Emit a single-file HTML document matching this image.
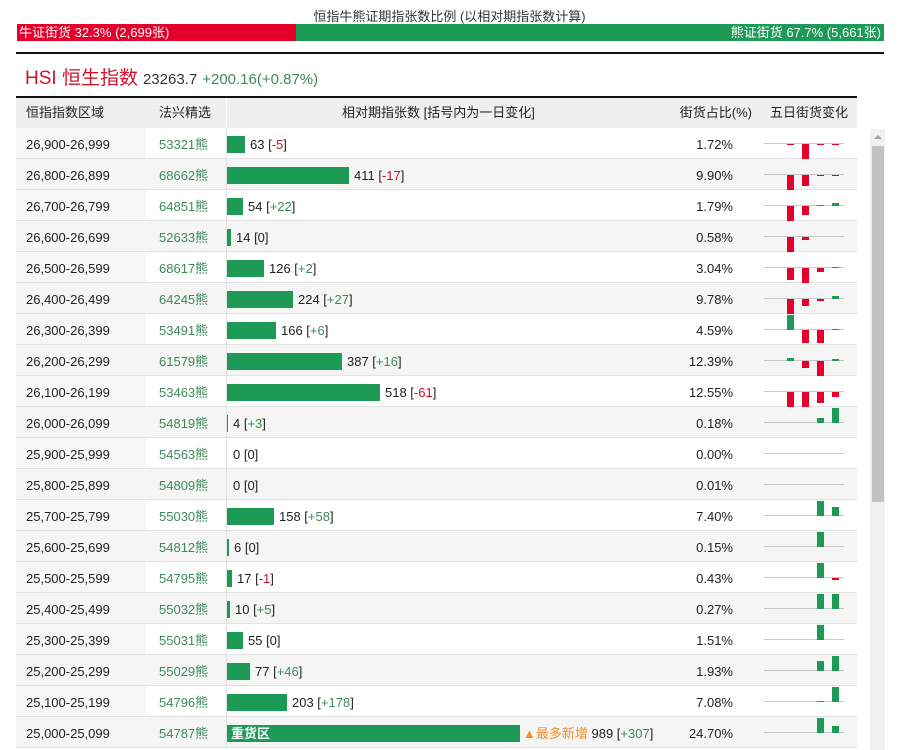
<!DOCTYPE html>
<html><head><meta charset="utf-8"><style>
*{margin:0;padding:0;box-sizing:border-box}
body{width:899px;height:750px;overflow:hidden;background:#fff;font-family:"Liberation Sans","Noto Sans CJK SC",sans-serif;font-size:13px;color:#222;position:relative}
.t{position:absolute;top:6px;left:0;width:899px;text-align:center;font-size:13px;color:#333}
.bar{position:absolute;top:24px;height:17px;color:#fff;font-size:13px;line-height:17px}
.line{position:absolute;left:16px;top:52px;width:868px;height:2px;background:#111}
.h{position:absolute;left:25px;top:63px;font-size:18px;color:#333}
.h b{font-weight:normal;color:#d0112b;font-size:19px}
.h em{font-style:normal;color:#3c8a5c;font-size:15px}
.h span{font-size:15px}
.hd{position:absolute;left:16px;top:96px;width:841px;height:32px;border-top:2px solid #111;background:#ededed;background-image:repeating-linear-gradient(45deg,rgba(255,255,255,.35) 0 1px,transparent 1px 3px)}
.hd div{position:absolute;top:0;line-height:29px;white-space:nowrap}
.r>div{position:absolute;top:0;line-height:33px;white-space:nowrap}
.r{position:absolute;left:16px;width:841px;height:31px;border-bottom:1px solid #e2e2e2;background:#fff}
.r.g{background:#f5f5f5}
.r .c1{left:0;width:130px;padding-left:10px;background:#f6f6f6;height:30px}
.r.g .c1{background:#f5f5f5}
.c2{left:143px;color:#3c8a5c}
.hd .c2{color:#222}
.c3{left:210px;height:30px;border-left:1px solid #e2e2e2;padding-left:0}
.c3 i{display:inline-block;height:17px;background:#1e9a57;vertical-align:middle;margin-right:5px;margin-top:-3px;color:#fff;font-style:normal;font-weight:bold;line-height:17px;padding-left:4px;overflow:hidden}
.c4{right:124px;text-align:right}
.c5{left:748px;width:80px;height:30px}
.c5:before{content:"";position:absolute;left:0;right:0;top:15px;height:1px;background:#c8c8c8}
.p{color:#3c8a5c}.n{color:#c8102e}
.b{position:absolute;width:7px}
.u{background:#1e9a57}.d{background:#e4002b}
.sb{position:absolute;left:870px;top:129px;width:15px;height:621px;background:#f1f1f1}
.th{position:absolute;left:872px;top:146px;width:12px;height:356px;background:#c1c1c1}
.ar{position:absolute;left:874px;top:135px;width:0;height:0;border-left:4px solid transparent;border-right:4px solid transparent;border-bottom:4px solid #a3a3a3}
</style></head><body>
<div class="t">恒指牛熊证期指张数比例 (以相对期指张数计算)</div>
<div class="bar" style="left:17px;width:279px;background:#e4002b;padding-left:2px">牛证街货 32.3% (2,699张)</div>
<div class="bar" style="left:296px;width:588px;background:#1e9a57;text-align:right;padding-right:3px">熊证街货 67.7% (5,661张)</div>
<div class="line"></div>
<div class="h"><b>HSI 恒生指数</b> <span>23263.7</span> <em>+200.16(+0.87%)</em></div>
<div class="hd">
<div style="left:10px">恒指指数区域</div>
<div class="c2">法兴精选</div>
<div style="left:210px;width:1px;height:30px;background:#fff"></div>
<div style="left:326px">相对期指张数 [括号内为一日变化]</div>
<div style="right:105px">街货占比(%)</div>
<div style="left:754px">五日街货变化</div>
</div>

<div class="r" style="top:128px"><div class="c1">26,900-26,999</div><div class="c2">53321熊</div><div class="c3"><i style="width:18px"></i>63 [<span class="n">-5</span>]</div><div class="c4">1.72%</div><div class="c5"><i class="b d" style="left:23px;top:16px;height:1px"></i><i class="b d" style="left:38px;top:16px;height:16px"></i><i class="b d" style="left:53px;top:16px;height:1px"></i><i class="b d" style="left:68px;top:16px;height:1px"></i></div></div>
<div class="r g" style="top:159px"><div class="c1">26,800-26,899</div><div class="c2">68662熊</div><div class="c3"><i style="width:122px"></i>411 [<span class="n">-17</span>]</div><div class="c4">9.90%</div><div class="c5"><i class="b d" style="left:23px;top:16px;height:15px"></i><i class="b d" style="left:38px;top:16px;height:11px"></i><i class="b d" style="left:53px;top:16px;height:1px"></i><i class="b d" style="left:68px;top:16px;height:1px"></i></div></div>
<div class="r" style="top:190px"><div class="c1">26,700-26,799</div><div class="c2">64851熊</div><div class="c3"><i style="width:16px"></i>54 [<span class="p">+22</span>]</div><div class="c4">1.79%</div><div class="c5"><i class="b d" style="left:23px;top:16px;height:15px"></i><i class="b d" style="left:38px;top:16px;height:9px"></i><i class="b u" style="left:53px;top:15px;height:1px"></i><i class="b u" style="left:68px;top:13px;height:3px"></i></div></div>
<div class="r g" style="top:221px"><div class="c1">26,600-26,699</div><div class="c2">52633熊</div><div class="c3"><i style="width:4px"></i>14 [0]</div><div class="c4">0.58%</div><div class="c5"><i class="b d" style="left:23px;top:16px;height:15px"></i><i class="b d" style="left:38px;top:16px;height:3px"></i></div></div>
<div class="r" style="top:252px"><div class="c1">26,500-26,599</div><div class="c2">68617熊</div><div class="c3"><i style="width:37px"></i>126 [<span class="p">+2</span>]</div><div class="c4">3.04%</div><div class="c5"><i class="b d" style="left:23px;top:16px;height:12px"></i><i class="b d" style="left:38px;top:16px;height:15px"></i><i class="b d" style="left:53px;top:16px;height:4px"></i><i class="b u" style="left:68px;top:15px;height:1px"></i></div></div>
<div class="r g" style="top:283px"><div class="c1">26,400-26,499</div><div class="c2">64245熊</div><div class="c3"><i style="width:66px"></i>224 [<span class="p">+27</span>]</div><div class="c4">9.78%</div><div class="c5"><i class="b d" style="left:23px;top:16px;height:15px"></i><i class="b d" style="left:38px;top:16px;height:7px"></i><i class="b d" style="left:53px;top:16px;height:2px"></i><i class="b u" style="left:68px;top:13px;height:3px"></i></div></div>
<div class="r" style="top:314px"><div class="c1">26,300-26,399</div><div class="c2">53491熊</div><div class="c3"><i style="width:49px"></i>166 [<span class="p">+6</span>]</div><div class="c4">4.59%</div><div class="c5"><i class="b u" style="left:23px;top:1px;height:15px"></i><i class="b d" style="left:38px;top:16px;height:13px"></i><i class="b d" style="left:53px;top:16px;height:13px"></i><i class="b u" style="left:68px;top:15px;height:1px"></i></div></div>
<div class="r g" style="top:345px"><div class="c1">26,200-26,299</div><div class="c2">61579熊</div><div class="c3"><i style="width:115px"></i>387 [<span class="p">+16</span>]</div><div class="c4">12.39%</div><div class="c5"><i class="b u" style="left:23px;top:13px;height:3px"></i><i class="b d" style="left:38px;top:16px;height:7px"></i><i class="b d" style="left:53px;top:16px;height:15px"></i><i class="b u" style="left:68px;top:14px;height:2px"></i></div></div>
<div class="r" style="top:376px"><div class="c1">26,100-26,199</div><div class="c2">53463熊</div><div class="c3"><i style="width:153px"></i>518 [<span class="n">-61</span>]</div><div class="c4">12.55%</div><div class="c5"><i class="b d" style="left:23px;top:16px;height:15px"></i><i class="b d" style="left:38px;top:16px;height:15px"></i><i class="b d" style="left:53px;top:16px;height:11px"></i><i class="b d" style="left:68px;top:16px;height:5px"></i></div></div>
<div class="r g" style="top:407px"><div class="c1">26,000-26,099</div><div class="c2">54819熊</div><div class="c3"><i style="width:1px;padding:0"></i>4 [<span class="p">+3</span>]</div><div class="c4">0.18%</div><div class="c5"><i class="b u" style="left:53px;top:11px;height:5px"></i><i class="b u" style="left:68px;top:1px;height:15px"></i></div></div>
<div class="r" style="top:438px"><div class="c1">25,900-25,999</div><div class="c2">54563熊</div><div class="c3"><i style="width:0;padding:0;margin-right:6px"></i>0 [0]</div><div class="c4">0.00%</div><div class="c5"></div></div>
<div class="r g" style="top:469px"><div class="c1">25,800-25,899</div><div class="c2">54809熊</div><div class="c3"><i style="width:0;padding:0;margin-right:6px"></i>0 [0]</div><div class="c4">0.01%</div><div class="c5"></div></div>
<div class="r" style="top:500px"><div class="c1">25,700-25,799</div><div class="c2">55030熊</div><div class="c3"><i style="width:47px"></i>158 [<span class="p">+58</span>]</div><div class="c4">7.40%</div><div class="c5"><i class="b u" style="left:53px;top:1px;height:15px"></i><i class="b u" style="left:68px;top:7px;height:9px"></i></div></div>
<div class="r g" style="top:531px"><div class="c1">25,600-25,699</div><div class="c2">54812熊</div><div class="c3"><i style="width:2px;padding:0"></i>6 [0]</div><div class="c4">0.15%</div><div class="c5"><i class="b u" style="left:53px;top:1px;height:15px"></i></div></div>
<div class="r" style="top:562px"><div class="c1">25,500-25,599</div><div class="c2">54795熊</div><div class="c3"><i style="width:5px;padding:0"></i>17 [<span class="n">-1</span>]</div><div class="c4">0.43%</div><div class="c5"><i class="b u" style="left:53px;top:1px;height:15px"></i><i class="b d" style="left:68px;top:16px;height:2px"></i></div></div>
<div class="r g" style="top:593px"><div class="c1">25,400-25,499</div><div class="c2">55032熊</div><div class="c3"><i style="width:3px;padding:0"></i>10 [<span class="p">+5</span>]</div><div class="c4">0.27%</div><div class="c5"><i class="b u" style="left:53px;top:1px;height:15px"></i><i class="b u" style="left:68px;top:1px;height:15px"></i></div></div>
<div class="r" style="top:624px"><div class="c1">25,300-25,399</div><div class="c2">55031熊</div><div class="c3"><i style="width:16px"></i>55 [0]</div><div class="c4">1.51%</div><div class="c5"><i class="b u" style="left:53px;top:1px;height:15px"></i></div></div>
<div class="r g" style="top:655px"><div class="c1">25,200-25,299</div><div class="c2">55029熊</div><div class="c3"><i style="width:23px"></i>77 [<span class="p">+46</span>]</div><div class="c4">1.93%</div><div class="c5"><i class="b u" style="left:53px;top:6px;height:10px"></i><i class="b u" style="left:68px;top:1px;height:15px"></i></div></div>
<div class="r" style="top:686px"><div class="c1">25,100-25,199</div><div class="c2">54796熊</div><div class="c3"><i style="width:60px"></i>203 [<span class="p">+178</span>]</div><div class="c4">7.08%</div><div class="c5"><i class="b u" style="left:53px;top:15px;height:1px"></i><i class="b u" style="left:68px;top:1px;height:15px"></i></div></div>
<div class="r g" style="top:717px"><div class="c1">25,000-25,099</div><div class="c2">54787熊</div><div class="c3"><i style="width:293px;margin-right:3px">重货区</i><span style="color:#f0902a">▲最多新增</span> 989 [<span class="p">+307</span>]</div><div class="c4">24.70%</div><div class="c5"><i class="b u" style="left:53px;top:1px;height:15px"></i><i class="b u" style="left:68px;top:9px;height:7px"></i></div></div>

<div class="sb"></div><div class="th"></div><div class="ar"></div>
</body></html>
